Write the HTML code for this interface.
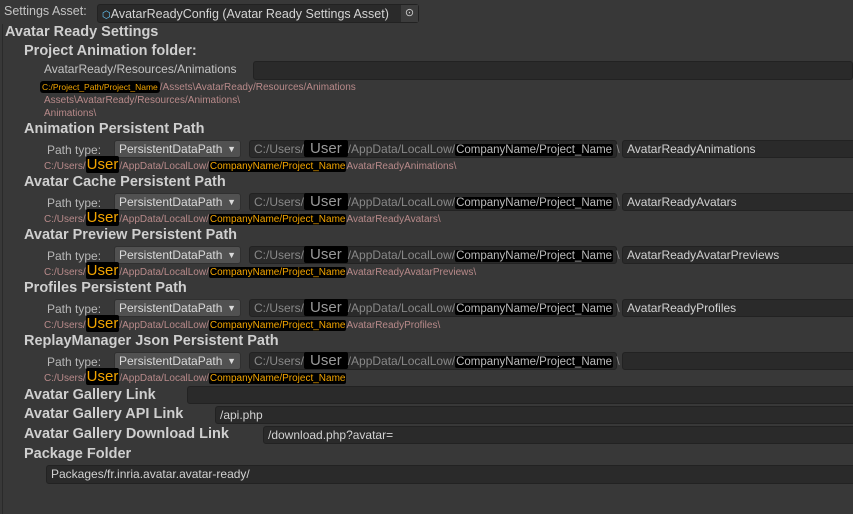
<!DOCTYPE html><html><head><style>
body{margin:0;width:853px;height:514px;background:#383838;overflow:hidden;font-family:"Liberation Sans",sans-serif;color:#c8c8c8;position:relative}
div,span{position:absolute;white-space:nowrap}
.h{font-weight:bold;font-size:14.5px;color:#cfcfcf}
.f{background:#2a2a2a;border:1px solid #222;border-radius:3px;box-sizing:border-box;height:18px;font-size:12px;line-height:16px;padding-left:4px;color:#d2d2d2}
.dd{background:#515151;border:1px solid #303030;border-radius:3px;box-sizing:border-box;height:18px;font-size:12px;line-height:16px;padding-left:4px;color:#dadada;width:127px}
.g{color:#888;font-size:12px}
.p{font-size:10px;color:#b88a8a}
.bk{position:static;background:#000;border-radius:2px;padding:0 1px}
.or{color:#f3a500}
.lbl{font-size:12px;color:#c4c4c4}
</style></head><body>
<div style="left:2px;top:0;width:1px;height:514px;background:#2a2a2a"></div>
<div style="left:0;top:0;width:853px;height:24px;background:#383838"></div>
<div class="lbl" style="left:4px;top:4px;font-size:12.5px">Settings Asset:</div>
<div style="left:97px;top:4px;width:322px;height:19px;background:#2a2a2a;border:1px solid #222;border-radius:3px;box-sizing:border-box"></div>
<div style="left:102px;top:7px;font-size:12.5px;color:#d4d4d4"><span style="position:static;color:#6cf;font-size:10px">⬡</span>AvatarReadyConfig (Avatar Ready Settings Asset)</div>
<div style="left:401px;top:5px;width:17px;height:17px;background:#3c3c3c;color:#ccc;font-size:11px;text-align:center;line-height:17px">⊙</div>
<div class="h" style="left:5px;top:24px">Avatar Ready Settings</div>
<div class="h" style="left:24px;top:43px">Project Animation folder:</div>
<div class="lbl" style="left:44px;top:62px">AvatarReady/Resources/Animations</div>
<div class="f" style="left:253px;top:61px;width:600px;height:19px"></div>
<div class="p" style="left:40px;top:82px"><span class="bk or" style="font-size:8.5px;padding:1px 2px;border-radius:3px">C:/Project_Path/Project_Name</span>/Assets\AvatarReady/Resources/Animations</div>
<div class="p" style="left:44px;top:95px">Assets\AvatarReady/Resources/Animations\</div>
<div class="p" style="left:44px;top:108px">Animations\</div>

<div id="s"></div>
<script>
const d=[["Animation Persistent Path","AvatarReadyAnimations"],["Avatar Cache Persistent Path","AvatarReadyAvatars"],["Avatar Preview Persistent Path","AvatarReadyAvatarPreviews"],["Profiles Persistent Path","AvatarReadyProfiles"],["ReplayManager Json Persistent Path",""]];
let h="";d.forEach((x,i)=>{const y=121+53*i;
h+=`<div class="h" style="left:24px;top:${y}px">${x[0]}</div>
<div class="lbl" style="left:47px;top:${y+22}px;color:#b8b8b8">Path type:</div>
<div class="dd" style="left:114px;top:${y+19}px">PersistentDataPath<span style="right:4px;top:0;font-size:9px">▼</span></div>
<div class="f g" style="left:249px;top:${y+19}px;width:368px;color:#888">C:/Users/<span class="bk" style="font-size:15px;color:#999;padding:0 6px;line-height:14px">User</span>/AppData/LocalLow/<span class="bk" style="color:#bbb;font-size:11.5px">CompanyName/Project_Name</span> \\</div>
<div class="f" style="left:622px;top:${y+19}px;width:240px">${x[1]}</div>
<div class="p" style="left:44px;top:${y+37}px">C:/Users/<span class="bk or" style="font-size:15px;line-height:13px">User</span>/AppData/LocalLow/<span class="bk or" style="font-size:10px">CompanyName/Project_Name</span>${x[1]?x[1]+'\\':''}</div>`;});
document.getElementById("s").outerHTML=h;
</script>
<div class="h" style="left:24px;top:387px">Avatar Gallery Link</div>
<div class="f" style="left:187px;top:386px;width:670px"></div>
<div class="h" style="left:24px;top:406px">Avatar Gallery API Link</div>
<div class="f" style="left:215px;top:406px;width:640px">/api.php</div>
<div class="h" style="left:24px;top:426px">Avatar Gallery Download Link</div>
<div class="f" style="left:263px;top:426px;width:600px">/download.php?avatar=</div>
<div class="h" style="left:24px;top:446px">Package Folder</div>
<div class="f" style="left:46px;top:465px;width:810px;height:19px">Packages/fr.inria.avatar.avatar-ready/</div>
</body></html>
